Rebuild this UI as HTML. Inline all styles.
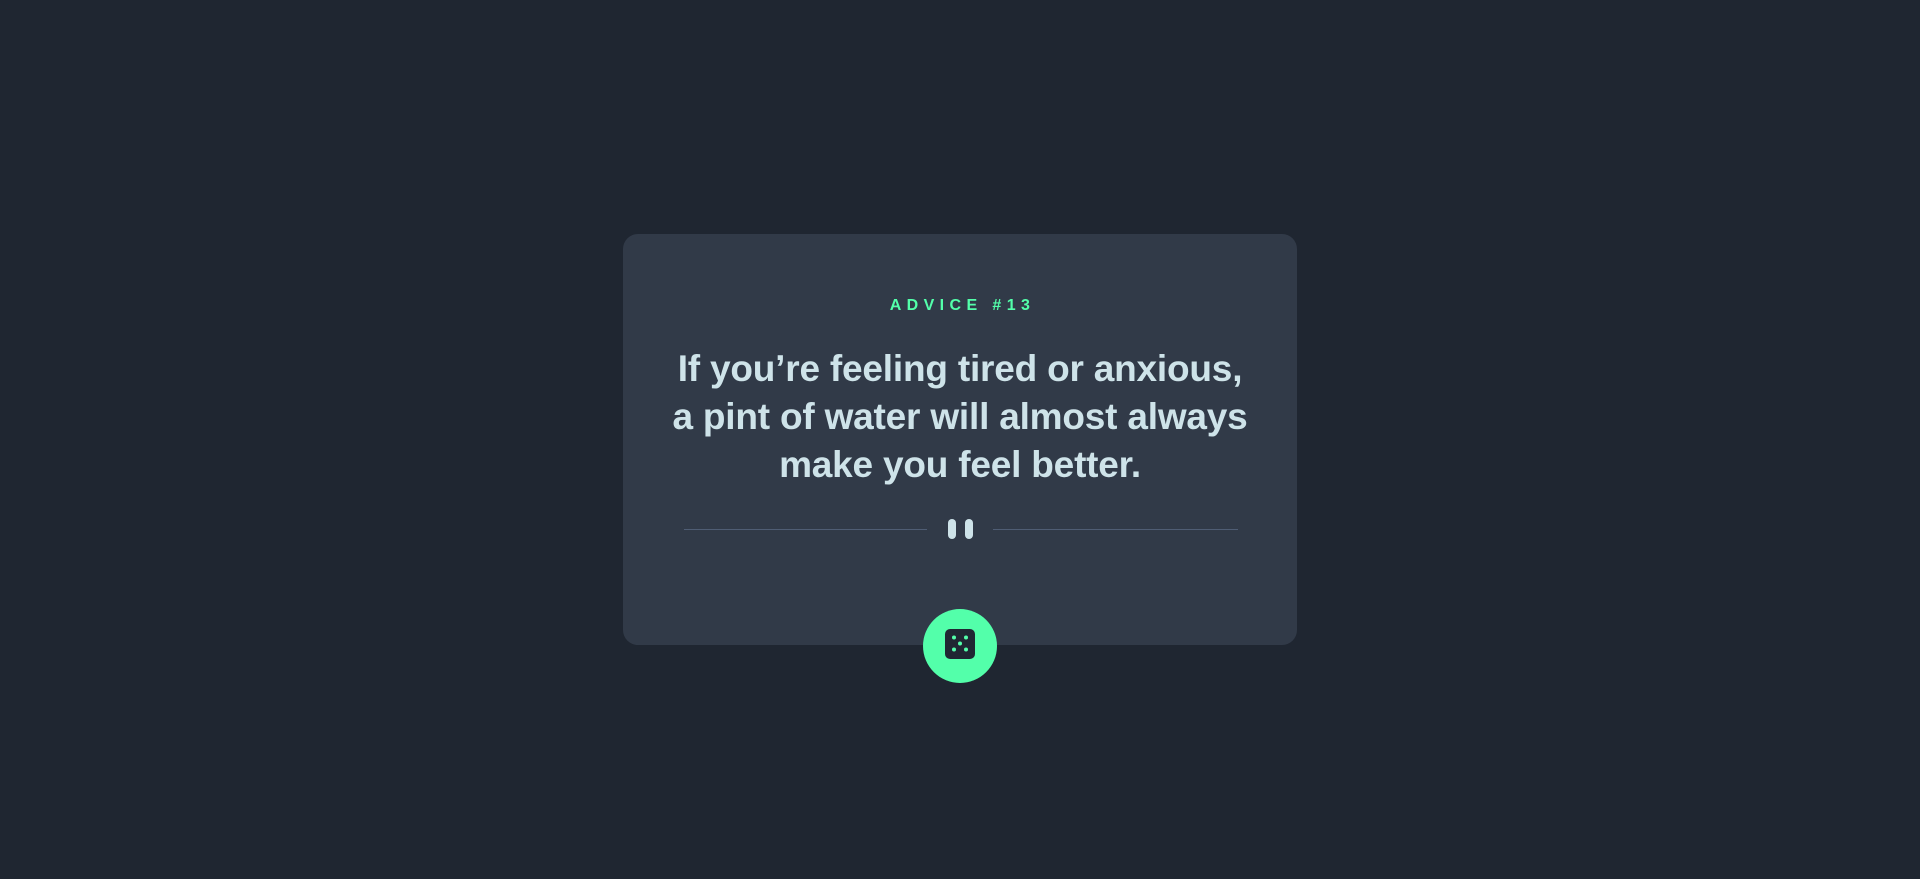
<!DOCTYPE html>
<html><head><meta charset="utf-8"><style>
html,body{margin:0;padding:0;background:#1f2631;width:1920px;height:879px;overflow:hidden;font-family:"Liberation Sans",sans-serif}
.card{position:absolute;left:623px;top:234px;width:674px;height:411px;background:#313a48;border-radius:15px}
.lab{position:absolute;left:0;right:0;top:297px;text-align:center;color:#53ffaa;font-size:16px;font-weight:bold;letter-spacing:5.4px;line-height:18px;text-indent:5px}
.q{position:absolute;left:603px;width:714px;top:345px;text-align:center;color:#cee3e9;font-size:37px;font-weight:bold;line-height:48px;letter-spacing:-0.2px}
.ln{position:absolute;top:529px;height:1px;background:#4f5d74}
.bar{position:absolute;top:519px;width:8px;height:20px;border-radius:4px;background:#cee3e9}
.btn{position:absolute;left:923px;top:609px;width:74px;height:74px;border-radius:50%;background:#53ffaa}
</style></head><body>
<div class="card"></div>
<div class="lab">ADVICE #13</div>
<div class="q">If you’re feeling tired or anxious,<br>a pint of water will almost always<br>make you feel better.</div>
<div class="ln" style="left:684px;width:243px"></div>
<div class="ln" style="left:993px;width:245px"></div>
<div class="bar" style="left:948px"></div>
<div class="bar" style="left:965px"></div>
<div class="btn"></div>
<svg style="position:absolute;left:945px;top:629px" width="30" height="30" viewBox="0 0 30 30">
<rect width="30" height="30" rx="5" fill="#202733"/>
<g fill="#53ffaa"><circle cx="9" cy="8.5" r="2"/><circle cx="21" cy="8.5" r="2"/><circle cx="15" cy="14.5" r="2"/><circle cx="9" cy="20.5" r="2"/><circle cx="21" cy="20.5" r="2"/></g>
</svg>
</body></html>
